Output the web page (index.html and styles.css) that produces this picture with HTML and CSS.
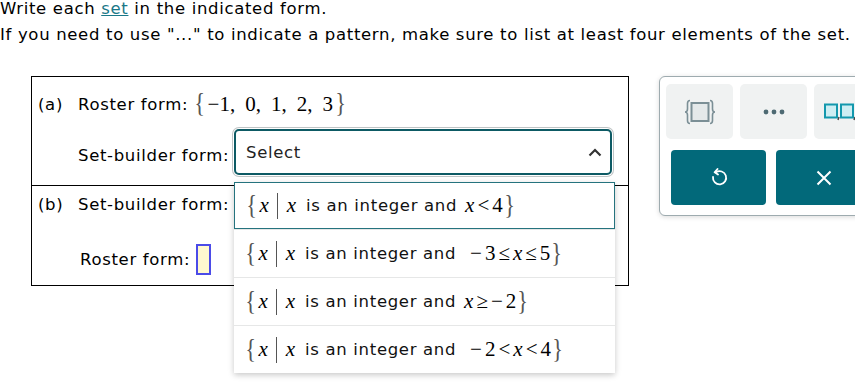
FILE: index.html
```html
<!DOCTYPE html>
<html>
<head>
<meta charset="utf-8">
<link rel="stylesheet" href="styles.css">
</head>
<body>
<div class="intro">
  <p>Write each <a class="term" href="#">set</a> in the indicated form.</p>
  <p>If you need to use "..." to indicate a pattern, make sure to list at least four elements of the set.</p>
</div>
<div class="workspace">
  <div class="question">
    <div class="part part-a">
      <div class="row first">
        <span class="tag">(a)</span>
        <span class="label">Roster form:</span>
        <span class="math roster"><span class="br">{</span><span class="num">−1,</span><span class="num">0,</span><span class="num">1,</span><span class="num">2,</span><span class="num last">3</span><span class="br">}</span></span>
      </div>
      <div class="row second">
        <span class="label lower sb">Set-builder form:</span>
        <div class="select-wrap">
          <div class="select">
            <span>Select</span>
            <svg class="chev" width="14" height="9" viewBox="0 0 14 9"><path d="M1.5 7.5 L7 2 L12.5 7.5" fill="none" stroke="#333" stroke-width="2.2"/></svg>
          </div>
          <div class="dropdown">
            <div class="opt active"><span class="math"><span class="br">{</span><i>x</i><span class="bar"></span><i>x</i></span><span class="txt">is an integer and</span><span class="math"><i>x</i><span class="rel">&lt;</span>4<span class="br">}</span></span></div>
            <div class="opt"><span class="math"><span class="br">{</span><i>x</i><span class="bar"></span><i>x</i></span><span class="txt">is an integer and</span><span class="math lead"><span class="un">−</span>3<span class="rel">≤</span><i>x</i><span class="rel">≤</span>5<span class="br">}</span></span></div>
            <div class="opt"><span class="math"><span class="br">{</span><i>x</i><span class="bar"></span><i>x</i></span><span class="txt">is an integer and</span><span class="math"><i>x</i><span class="rel">≥</span><span class="un">−</span>2<span class="br">}</span></span></div>
            <div class="opt"><span class="math"><span class="br">{</span><i>x</i><span class="bar"></span><i>x</i></span><span class="txt">is an integer and</span><span class="math lead"><span class="un">−</span>2<span class="rel">&lt;</span><i>x</i><span class="rel">&lt;</span>4<span class="br">}</span></span></div>
          </div>
        </div>
      </div>
    </div>
    <div class="part part-b">
      <div class="row first">
        <span class="tag">(b)</span>
        <span class="label">Set-builder form:</span>
      </div>
      <div class="row second roster-row">
        <span class="label">Roster form:</span>
        <span class="answer-box"></span>
      </div>
    </div>
  </div>
  <div class="panel">
    <div class="tools">
      <div class="tool">
        <svg width="32" height="26" viewBox="0 0 32 26">
          <path d="M6 1.5 C4 1.5 3.5 2.5 3.5 4.5 L3.5 10 C3.5 12 2.5 13 1 13 C2.5 13 3.5 14 3.5 16 L3.5 21.5 C3.5 23.5 4 24.5 6 24.5" fill="none" stroke="#7b8f96" stroke-width="1.6"/>
          <path d="M26 1.5 C28 1.5 28.5 2.5 28.5 4.5 L28.5 10 C28.5 12 29.5 13 31 13 C29.5 13 28.5 14 28.5 16 L28.5 21.5 C28.5 23.5 28 24.5 26 24.5" fill="none" stroke="#7b8f96" stroke-width="1.6"/>
          <rect x="7.5" y="4" width="17" height="18" fill="#e4e9ea" stroke="#7b8f96" stroke-width="2"/>
        </svg>
      </div>
      <div class="tool">
        <svg width="24" height="8" viewBox="0 0 24 8"><circle cx="4" cy="4" r="2.4" fill="#4e6a73"/><circle cx="12" cy="4" r="2.4" fill="#4e6a73"/><circle cx="20" cy="4" r="2.4" fill="#4e6a73"/></svg>
      </div>
      <div class="tool left">
        <svg width="40" height="18" viewBox="0 0 40 18">
          <rect x="1" y="1.5" width="12" height="13" fill="#cdeef3" stroke="#1398ad" stroke-width="2"/>
          <path d="M15 14 L14 17" stroke="#444" stroke-width="1.4"/>
          <rect x="17" y="1.5" width="12" height="13" fill="#cdeef3" stroke="#1398ad" stroke-width="2"/>
          <path d="M31 14 L30 17" stroke="#444" stroke-width="1.4"/>
        </svg>
      </div>
    </div>
    <div class="actions">
      <div class="action">
        <svg width="20" height="20" viewBox="0 0 20 20">
          <path d="M7 4.2 A6.6 6.6 0 1 1 4 9" fill="none" stroke="#fff" stroke-width="1.8" stroke-linecap="round"/>
          <path d="M8.5 1 L5.6 4.3 L9 6.6" fill="none" stroke="#fff" stroke-width="1.8" stroke-linecap="round" stroke-linejoin="round"/>
        </svg>
      </div>
      <div class="action">
        <svg width="16" height="16" viewBox="0 0 16 16"><path d="M1.5 1.5 L14.5 14.5 M14.5 1.5 L1.5 14.5" stroke="#fff" stroke-width="2"/></svg>
      </div>
    </div>
  </div>
</div>
</body>
</html>
```
FILE: styles.css
```css
html, body {
  margin: 0;
  padding: 0;
  background: #fff;
}
body {
  width: 855px;
  height: 387px;
  overflow: hidden;
  font-family: "DejaVu Sans", Verdana, sans-serif;
  font-size: 16.5px;
  letter-spacing: 0.67px;
  color: #000;
}
.intro {
  margin-top: -4px;
  line-height: 26px;
}
.intro p {
  margin: 0;
  white-space: nowrap;
}
.term {
  color: #1a7888;
  text-decoration: underline;
}
.workspace {
  display: flex;
  align-items: flex-start;
  margin-top: 28px;
  padding-left: 31px;
}
.question {
  flex: none;
  width: 598px;
  box-sizing: border-box;
  border: 1px solid #000;
}
.part-a {
  padding: 14px 0 11px 6px;
  border-bottom: 1px solid #000;
}
.part-b {
  padding: 5px 0 11px 6px;
}
.row {
  display: flex;
  align-items: center;
  white-space: nowrap;
}
.row.first {
  height: 26px;
}
.tag {
  width: 40px;
  flex: none;
}
.part-a .row.second {
  margin-top: 12px;
  margin-left: 40px;
}
.label {
  flex: none;
}
.label.sb {
  width: 156px;
}
.label.lower {
  padding-top: 8px;
}
.math {
  font-family: "Liberation Serif", "Times New Roman", serif;
  font-size: 21px;
  letter-spacing: 0;
  display: inline-flex;
  align-items: center;
}
.math i {
  font-style: italic;
}
.br {
  font-size: 28px;
  color: #555;
  transform: scaleX(0.8);
  display: inline-block;
  line-height: 1;
  position: relative;
  top: -1px;
}
.roster {
  margin-left: 5px;
}
.roster .num {
  margin-right: 10px;
}
.roster .num.last {
  margin-right: 1px;
}
.roster .br:first-child {
  margin-right: 1px;
}
.select-wrap {
  position: relative;
}
.select {
  box-sizing: border-box;
  width: 378px;
  height: 46px;
  border: 2px solid #0d5a64;
  border-radius: 5px;
  box-shadow: 0 0 0 1px #fff, 0 0 0 2px #bfc4c5;
  display: flex;
  align-items: center;
  justify-content: space-between;
  padding: 0 8px 0 10px;
  color: #222;
  margin-bottom: -1px;
}
.chev {
  margin-top: 1px;
}
.dropdown {
  position: absolute;
  left: 0;
  top: 53px;
  width: 381px;
  background: #fff;
  box-shadow: 0 2px 6px rgba(0, 0, 0, 0.22);
  z-index: 5;
}
.opt {
  box-sizing: border-box;
  height: 48px;
  display: flex;
  align-items: center;
  padding-left: 10px;
  border-top: 1px solid #e6e7e7;
}
.opt:first-child {
  border-top: none;
}
.opt.active {
  border: 1px solid #25737e;
  height: 47px;
}
.opt .br:first-child {
  margin-right: 1px;
}
.bar {
  display: inline-block;
  width: 1px;
  height: 26px;
  background: #555;
  margin: 0 9px 0 8px;
}
.txt {
  margin: 0 8px 0 10px;
  color: #111;
}
.math.lead {
  margin-left: 6px;
}
.rel {
  margin: 0 3px;
}
.un {
  margin-right: 3px;
}
.roster-row {
  margin-top: 27px;
  height: 30px;
  margin-left: 42px;
}
.answer-box {
  box-sizing: border-box;
  width: 15px;
  height: 31px;
  background: #fff9cf;
  border: 2px solid #4b4be8;
  margin-left: 6px;
}
.panel {
  margin-left: 30px;
  width: 230px;
  flex: none;
  box-sizing: border-box;
  border: 1px solid #9eabaf;
  border-radius: 6px;
  box-shadow: 0 1px 5px rgba(0, 0, 0, 0.15);
  padding: 7px 0 10px 6px;
  background: #fff;
}
.tools {
  display: flex;
  gap: 7px;
}
.tool {
  flex: none;
  width: 67px;
  height: 55px;
  border-radius: 5px;
  background: #f0f2f2;
  display: flex;
  align-items: center;
  justify-content: center;
}
.tool.left {
  justify-content: flex-start;
  padding-left: 10px;
  box-sizing: border-box;
}
.actions {
  display: flex;
  gap: 10px;
  margin-top: 11px;
  padding-left: 5px;
}
.action {
  flex: none;
  width: 95px;
  height: 55px;
  border-radius: 4px;
  background: #02697a;
  display: flex;
  align-items: center;
  justify-content: center;
}
```
